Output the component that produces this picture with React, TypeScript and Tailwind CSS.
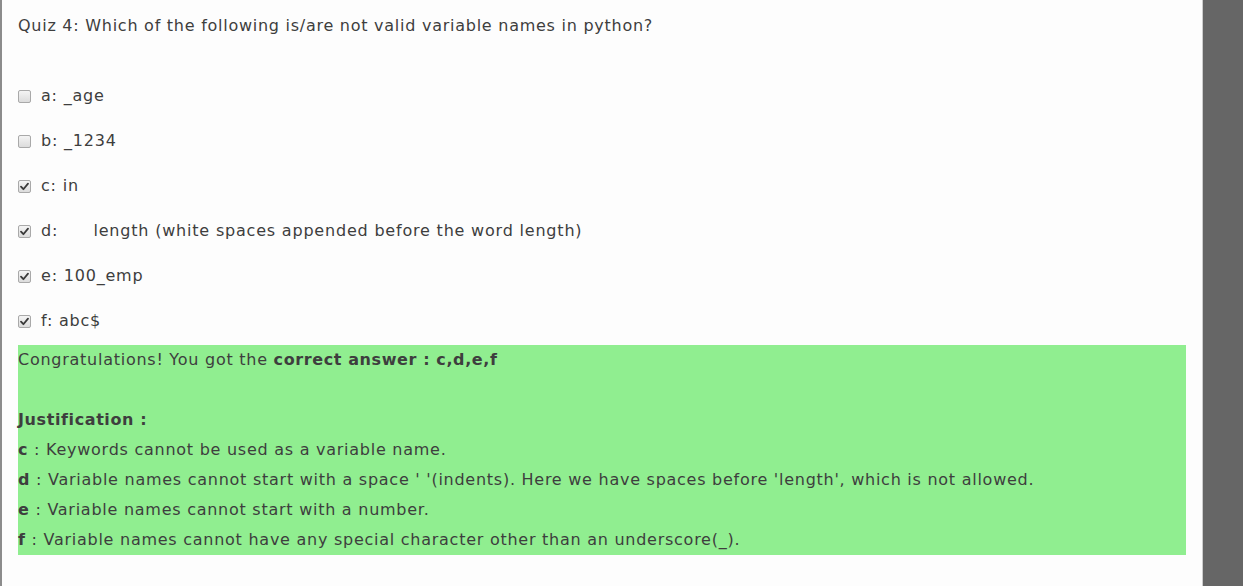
import type { ReactNode } from 'react';

type Option = {
  key: string;
  text: string;
  checked: boolean;
};

const options: Option[] = [
  { key: 'a', text: '_age', checked: false },
  { key: 'b', text: '_1234', checked: false },
  { key: 'c', text: 'in', checked: true },
  { key: 'd', text: '     length (white spaces appended before the word length)', checked: true },
  { key: 'e', text: '100_emp', checked: true },
  { key: 'f', text: 'abc$', checked: true },
];

const reasons: { key: string; text: ReactNode }[] = [
  { key: 'c', text: ' : Keywords cannot be used as a variable name.' },
  {
    key: 'd',
    text: " : Variable names cannot start with a space ' '(indents). Here we have spaces before 'length', which is not allowed.",
  },
  { key: 'e', text: ' : Variable names cannot start with a number.' },
  { key: 'f', text: ' : Variable names cannot have any special character other than an underscore(_).' },
];

function CheckBox({ checked }: { checked: boolean }) {
  return (
    <span className="mr-[10px] flex h-[13px] w-[13px] shrink-0 items-center justify-center rounded-[2px] border border-[#a9a9a9] bg-gradient-to-b from-[#f4f4f4] to-[#dcdcdc]">
      {checked && (
        <svg width="9" height="9" viewBox="0 0 9 9">
          <path d="M1 4.6 L3.4 7.2 L8 1.6" fill="none" stroke="#3a3a3a" strokeWidth="1.8" strokeLinecap="round" strokeLinejoin="round" />
        </svg>
      )}
    </span>
  );
}

export default function App() {
  return (
    <div className="flex h-[586px] overflow-hidden font-['DejaVu_Sans',Verdana,sans-serif] text-[16px] tracking-[0.74px] text-[#3e3e3e]">
      <div className="w-[1203px] shrink-0 border-l-2 border-r border-l-[#8c8c8c] border-r-[#cdcdcd] bg-[#fdfdfd] pl-4 pr-4 pt-[11px]">
        <p className="leading-[30px]">Quiz 4: Which of the following is/are not valid variable names in python?</p>

        <ul className="mt-[40px] flex flex-col gap-[15px]">
          {options.map((option) => (
            <li key={option.key} className="flex h-[30px] items-center tracking-[0.8px]">
              <CheckBox checked={option.checked} />
              <span className="whitespace-pre">
                {option.key}: {option.text}
              </span>
            </li>
          ))}
        </ul>

        <div className="mt-[9px] bg-[#90ee90] leading-[30px]">
          <p>
            Congratulations! You got the <b className="tracking-[0.6px]">correct answer : c,d,e,f</b>
          </p>
          <p className="h-[30px]" />
          <p className="font-bold tracking-[0.6px]">Justification :</p>
          {reasons.map((reason) => (
            <p key={reason.key}>
              <b>{reason.key}</b>
              {reason.text}
            </p>
          ))}
        </div>
      </div>
      <div className="flex-1 bg-[#666666]" />
    </div>
  );
}
